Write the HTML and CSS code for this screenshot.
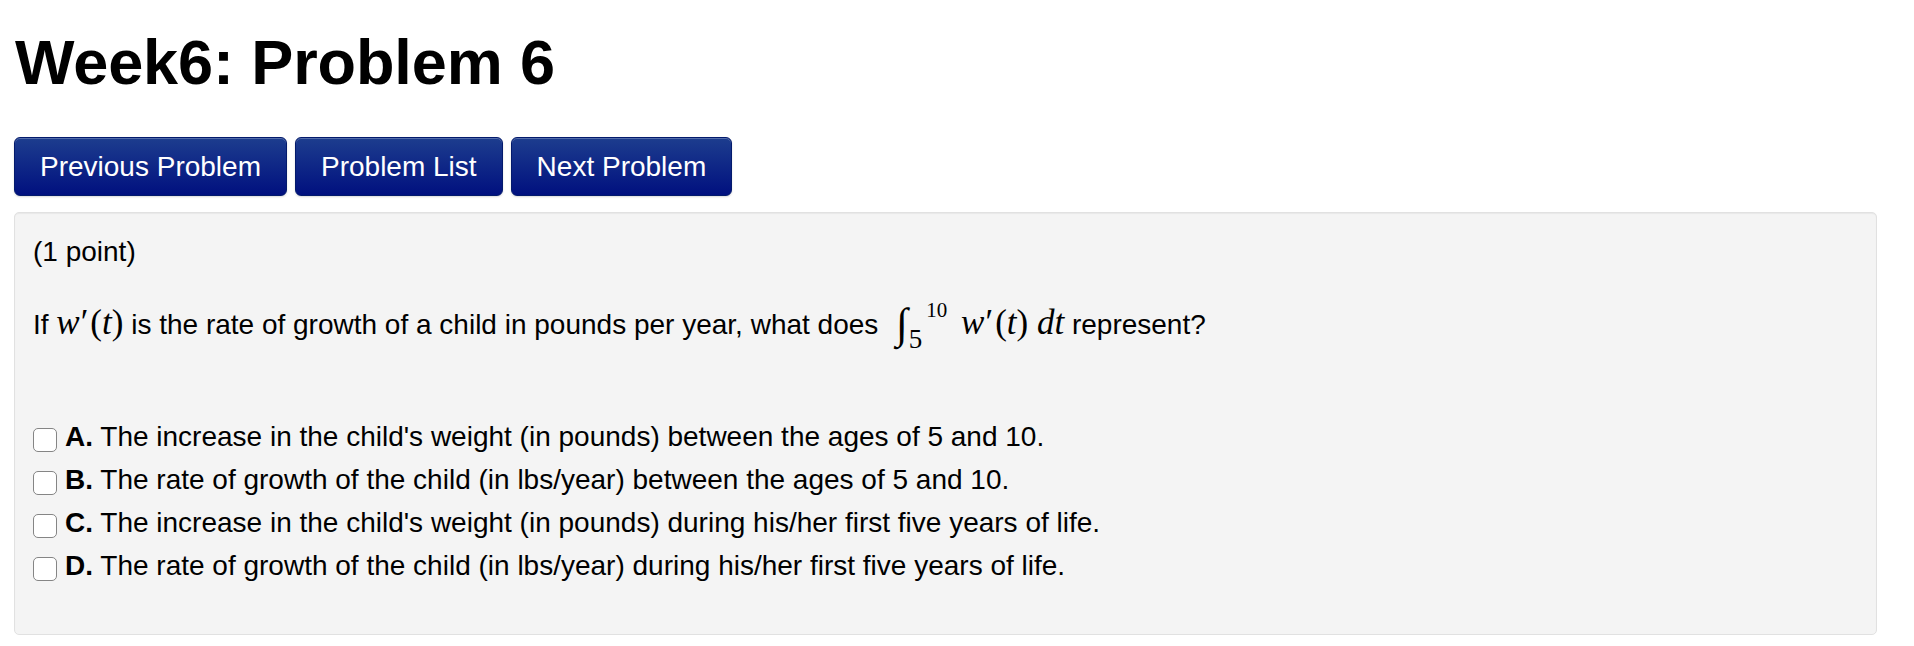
FILE: index.html
```html
<!DOCTYPE html>
<html lang="en">
<head>
<meta charset="utf-8">
<title>Week6: Problem 6</title>
<link rel="stylesheet" href="styles.css">
</head>
<body>
<div class="page">
  <h1 class="title">Week6: Problem 6</h1>
  <div class="nav">
    <a class="btn">Previous Problem</a>
    <a class="btn">Problem List</a>
    <a class="btn">Next Problem</a>
  </div>
  <div class="well">
    <p class="points">(1 point)</p>
    <p class="question">If <span class="math"><i>w</i><span class="prime">′</span><span class="paren">(</span><i>t</i><span class="paren">)</span></span> is the rate of growth of a child in pounds per year, what does <span class="math"><span class="int">∫</span><span class="sub">5</span><span class="sup">10</span> <span class="body"><i>w</i><span class="prime">′</span><span class="paren">(</span><i>t</i><span class="paren">)</span> <i>dt</i></span></span> represent?</p>
    <div class="options">
      <label class="opt"><input type="checkbox" class="cb"><b>A.</b> The increase in the child's weight (in pounds) between the ages of 5 and 10.</label>
      <label class="opt"><input type="checkbox" class="cb"><b>B.</b> The rate of growth of the child (in lbs/year) between the ages of 5 and 10.</label>
      <label class="opt"><input type="checkbox" class="cb"><b>C.</b> The increase in the child's weight (in pounds) during his/her first five years of life.</label>
      <label class="opt"><input type="checkbox" class="cb"><b>D.</b> The rate of growth of the child (in lbs/year) during his/her first five years of life.</label>
    </div>
  </div>
</div>
</body>
</html>
```
FILE: styles.css
```css
html, body {
  margin: 0;
  padding: 0;
  background: #ffffff;
}
body {
  font-family: "Liberation Sans", Arial, Helvetica, sans-serif;
  color: #000;
}
.page {
  padding: 0 37px 0 14px;
}
.title {
  font-size: 63px;
  line-height: 70px;
  font-weight: 700;
  letter-spacing: -0.1px;
  margin: 27px 0 40px 1px;
  color: #000;
}
.nav {
  display: flex;
  gap: 8px;
}
.btn {
  display: block;
  box-sizing: border-box;
  height: 59px;
  padding: 0 25px;
  font-size: 28px;
  line-height: 57px;
  color: #fff;
  border: 1px solid #031a6c;
  border-radius: 6px;
  background: linear-gradient(#1d3d8e, #00107f);
  box-shadow: inset 0 1px 0 rgba(255, 255, 255, 0.25), 0 1px 2px rgba(0, 0, 0, 0.15);
  cursor: pointer;
}
.well {
  margin-top: 16px;
  background: #f4f4f4;
  border: 1px solid #e1e1e1;
  border-radius: 5px;
  padding: 18px 18px 47px;
  box-shadow: inset 0 1px 1px rgba(0, 0, 0, 0.05);
  font-size: 28px;
  line-height: 42px;
}
.points {
  margin: 0;
}
.question {
  margin: 31px 0 0;
}
.math {
  font-family: "Liberation Serif", "Times New Roman", serif;
  font-size: 35px;
  line-height: 0;
}
.math i {
  font-style: italic;
}
.prime {
  font-family: "Liberation Serif", "DejaVu Serif", serif;
  font-style: normal;
  margin-left: 1px;
  margin-right: 2px;
}
.int {
  font-size: 43px;
  font-style: italic;
  display: inline-block;
  line-height: 0;
  vertical-align: -4px;
  margin-left: 10px;
}
.sub {
  font-size: 27px;
  vertical-align: -14px;
  line-height: 0;
  margin-left: 1px;
}
.sup {
  font-size: 21px;
  vertical-align: 17px;
  line-height: 0;
  margin-left: 4px;
}
.body {
  margin-left: 5px;
}
.options {
  margin-top: 69px;
}
.opt {
  display: block;
  line-height: 43px;
}
.cb {
  appearance: none;
  -webkit-appearance: none;
  box-sizing: border-box;
  width: 24px;
  height: 24px;
  margin: 0 8px 0 0;
  border: 1.5px solid #858585;
  border-radius: 5px;
  background: #fff;
  vertical-align: -6px;
}
.opt b {
  font-weight: 700;
}
```
